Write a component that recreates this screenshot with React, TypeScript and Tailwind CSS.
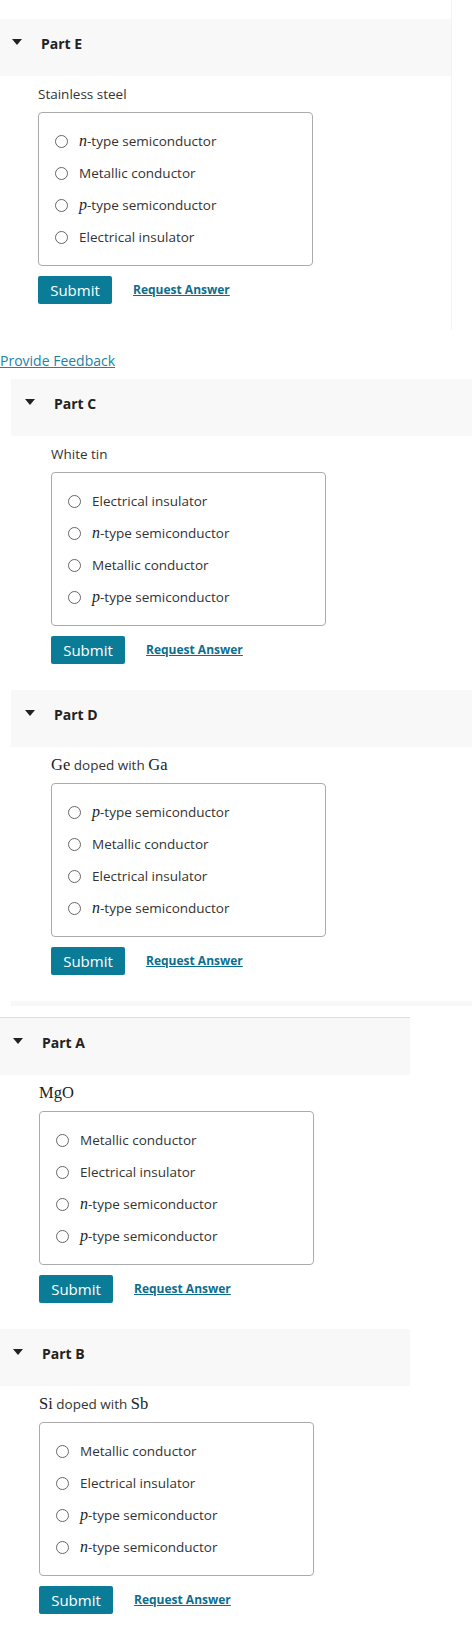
import type { ReactNode } from "react";

const Mi = ({ c }: { c: string }) => (
  <span className="font-['Liberation_Serif',serif] text-[16px] italic text-[#222]">{c}</span>
);

const Rm = ({ c }: { c: string }) => (
  <span className="font-['Liberation_Serif',serif] text-[16.5px] text-[#222]">{c}</span>
);

const nType = (
  <>
    <Mi c="n" />-type semiconductor
  </>
);
const pType = (
  <>
    <Mi c="p" />-type semiconductor
  </>
);

type PartProps = {
  title: string;
  question: ReactNode;
  options: ReactNode[];
  headPad: string;
  bodyPad: string;
  className?: string;
};

function Triangle() {
  return (
    <svg width="10" height="6" viewBox="0 0 10 6" className="-mt-[3px] shrink-0">
      <path d="M0 0 L10 0 L5 6 Z" fill="#222" />
    </svg>
  );
}

function Part({ title, question, options, headPad, bodyPad, className = "" }: PartProps) {
  return (
    <div className={className}>
      <div className={`flex h-[57px] items-center bg-[#f8f8f8] pb-[9px] ${headPad}`}>
        <Triangle />
        <span className="ml-[19px] text-[14px] font-bold text-[#222]">{title}</span>
      </div>
      <div className={bodyPad}>
        <div className="mt-[9px] flex h-[18px] items-center text-[13.5px] text-[#333]">
          <span>{question}</span>
        </div>
        <div className="mt-[9px] w-[275px] rounded-[4px] border border-[#ababab] py-3 pl-4">
          {options.map((opt, i) => (
            <div key={i} className="flex h-[32px] items-center">
              <span className="h-[13px] w-[13px] shrink-0 rounded-full border border-[#666] bg-white" />
              <span className="ml-[11px] text-[13.5px] text-[#333]">{opt}</span>
            </div>
          ))}
        </div>
        <div className="mt-[10px] flex items-center">
          <button
            type="button"
            className="h-[28px] w-[74px] rounded-[2px] bg-[#0b7c98] text-[15px] text-white"
          >
            Submit
          </button>
          <a className="ml-[21px] text-[12px] font-bold text-[#0d6e8c] underline">
            Request Answer
          </a>
        </div>
      </div>
    </div>
  );
}

export default function App() {
  return (
    <div className="h-[1636px] w-[472px] bg-white font-['Open_Sans',sans-serif]">
      <div className="w-[452px] border-r border-[#f3f3f3] pb-[26px] pt-[19px]">
        <Part
          title="Part E"
          question="Stainless steel"
          options={[nType, "Metallic conductor", pType, "Electrical insulator"]}
          headPad="pl-3"
          bodyPad="pl-[38px]"
        />
      </div>

      <div className="mt-[20px] flex h-[20px] items-center">
        <a className="text-[14px] text-[#2183a6] underline">Provide Feedback</a>
      </div>

      <div className="mt-[9px] pl-[11px]">
        <Part
          title="Part C"
          question="White tin"
          options={["Electrical insulator", nType, "Metallic conductor", pType]}
          headPad="pl-[14px]"
          bodyPad="pl-[40px]"
        />
        <Part
          className="mt-[26px]"
          title="Part D"
          question={
            <>
              <Rm c="Ge" /> doped with <Rm c="Ga" />
            </>
          }
          options={[pType, "Metallic conductor", "Electrical insulator", nType]}
          headPad="pl-[14px]"
          bodyPad="pl-[40px]"
        />
        <div className="mt-[26px] h-[5px] bg-[#f8f8f8]" />
      </div>

      <div className="mt-[11px] h-px w-[410px] bg-[#dedede]" />

      <div className="w-[410px]">
        <Part
          title="Part A"
          question={<Rm c="MgO" />}
          options={["Metallic conductor", "Electrical insulator", nType, pType]}
          headPad="pl-[13px]"
          bodyPad="pl-[39px]"
        />
        <Part
          className="mt-[26px]"
          title="Part B"
          question={
            <>
              <Rm c="Si" /> doped with <Rm c="Sb" />
            </>
          }
          options={["Metallic conductor", "Electrical insulator", pType, nType]}
          headPad="pl-[13px]"
          bodyPad="pl-[39px]"
        />
      </div>
    </div>
  );
}
